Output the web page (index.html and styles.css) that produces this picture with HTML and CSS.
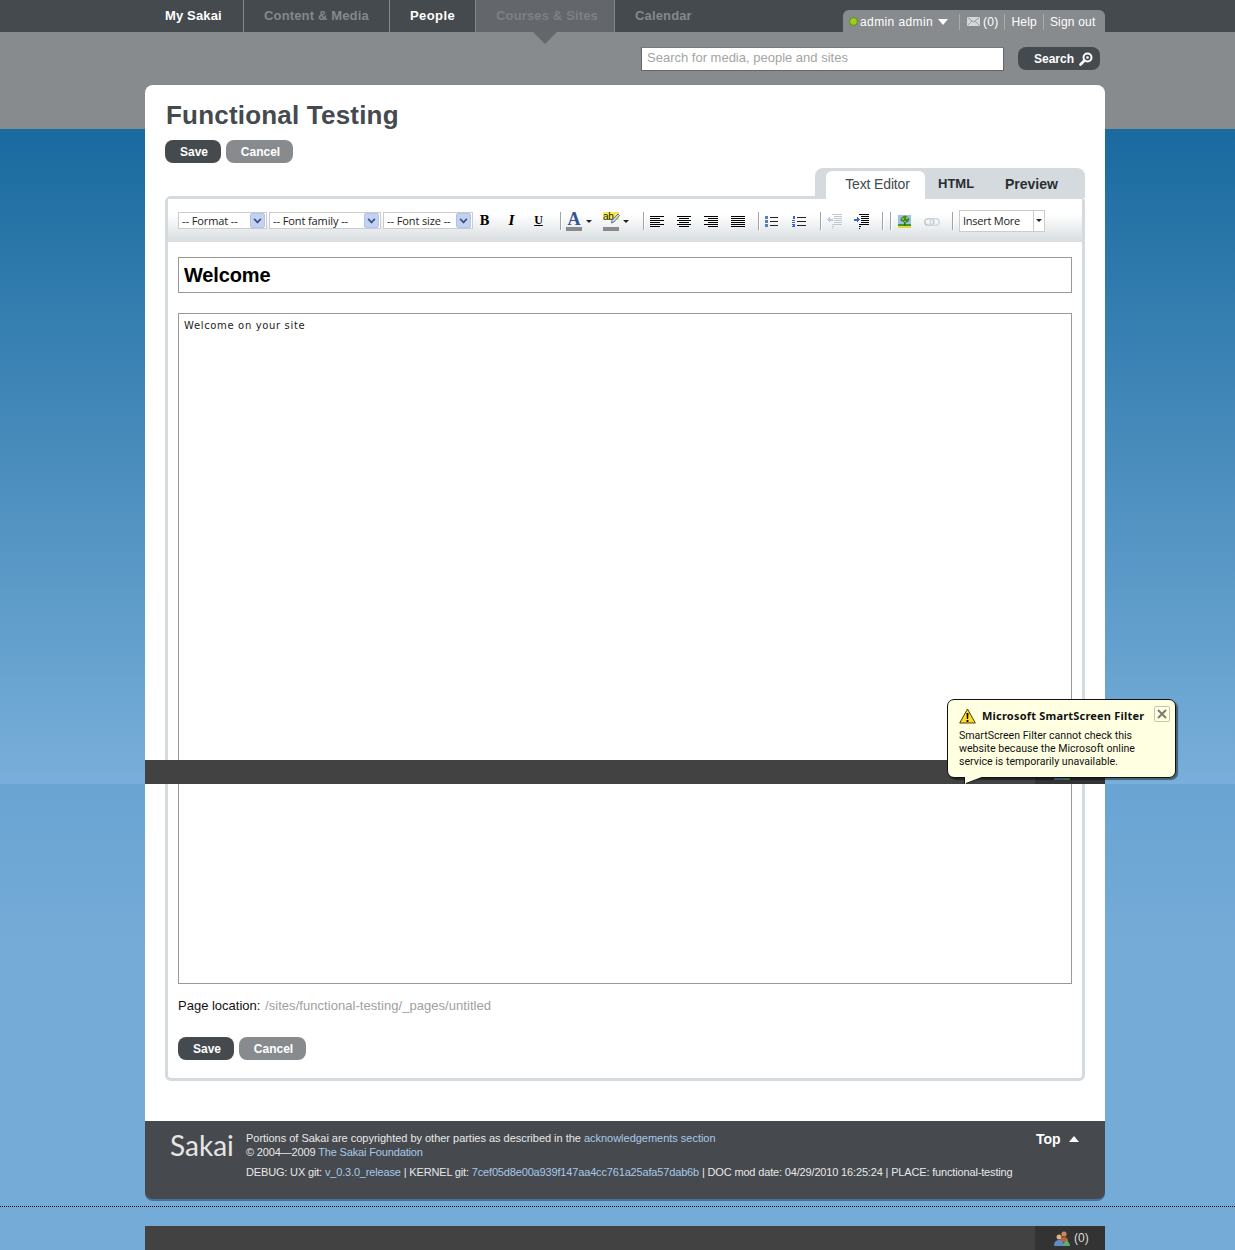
FILE: index.html
```html
<!DOCTYPE html>
<html lang="en">
<head>
    <meta charset="UTF-8">
    <meta name="viewport" content="width=device-width, initial-scale=1.0">
    <title>Functional Testing</title>
    <link rel="stylesheet" href="styles.css">
</head>
<body>

    <!-- toolbar icons -->
    <svg class="icon-defs" width="0" height="0" aria-hidden="true">
        <symbol id="i-left" viewBox="0 0 14 12" shape-rendering="crispEdges"><path d="M0 .5h14M0 2.500h10M0 4.500h14M0 6.500h10M0 8.500h14M0 10.500h10" stroke="#000"/></symbol>
        <symbol id="i-center" viewBox="0 0 14 12" shape-rendering="crispEdges"><path d="M0 .5h14M2 2.500h10M0 4.500h14M2 6.500h10M0 8.500h14M2 10.500h10" stroke="#000"/></symbol>
        <symbol id="i-right" viewBox="0 0 14 12" shape-rendering="crispEdges"><path d="M0 .5h14M4 2.500h10M0 4.500h14M4 6.500h10M0 8.500h14M4 10.500h10" stroke="#000"/></symbol>
        <symbol id="i-justify" viewBox="0 0 14 12" shape-rendering="crispEdges"><path d="M0 .5h14M0 2.500h14M0 4.500h14M0 6.500h14M0 8.500h14M0 10.500h14" stroke="#000"/></symbol>
        <symbol id="i-bullets" viewBox="0 0 14 12" shape-rendering="crispEdges"><path d="M5 1.500h8M5 5.500h8M5 9.500h8" stroke="#222"/><path d="M0 0h3v3H0zM0 4h3v3H0zM0 8h3v3H0z" fill="#5a7db8"/></symbol>
        <symbol id="i-numbers" viewBox="0 0 14 12" shape-rendering="crispEdges"><path d="M5 1.500h9M5 5.500h9M5 9.500h9" stroke="#222"/><path d="M1 0h2v3H1zM0 4h3v1H0zM0 6h3v1H0zM0 8h3v1H0zM1 9h2v1H1zM0 10h3v1H0z" fill="#3f66c4"/></symbol>
        <symbol id="i-outdent" viewBox="0 0 15 15" shape-rendering="crispEdges"><path d="M5 .5h10M7 2.500h8M7 4.500h8M7 6.500h8M7 8.500h8M5 10.500h10M5 12.500h2M5 14.500h1" stroke="#c4c8cc"/><path d="M0 5.500l3-3v2h3v2H3v2z" fill="#b9c8e6"/></symbol>
        <symbol id="i-indent" viewBox="0 0 15 15" shape-rendering="crispEdges"><path d="M5 .5h10M7 2.500h8M7 4.500h8M7 6.500h8M7 8.500h8M5 10.500h10M5 12.500h2M5 14.500h1" stroke="#000"/><path d="M6 5.500l-3-3v2H0v2h3v2z" fill="#3f66c4"/></symbol>
        <symbol id="i-picture" viewBox="0 0 13 13"><path d="M0 0h13v9H0z" fill="#9cc0e6"/><path d="M0 9h13v2H0z" fill="#3a9a2a"/><path d="M0 11h13v2H0z" fill="#e8d840"/><path d="M6 7h1.500v3.500H6z" fill="#6b4a1f"/><path d="M2 5l2-3 3-1.500L10 2l1.500 2.500L10 7 7 8 5 7z" fill="#3f8a22"/><path d="M4 3h2v2H4zM8 2h2v2H8zM6 6h2v1H6z" fill="#86c24a"/></symbol>
        <symbol id="i-link" viewBox="0 0 16 10"><rect x=".8" y="1.800" width="9" height="6.400" rx="3.200" fill="none" stroke="#c6cace" stroke-width="1.600"/><rect x="6.200" y="1.800" width="9" height="6.400" rx="3.200" fill="none" stroke="#d4d8db" stroke-width="1.600"/></symbol>
        <symbol id="i-people" viewBox="0 0 16 15"><circle cx="10" cy="3" r="2.600" fill="#c98a5a"/><path d="M6 10c0-3 2-4 4-4s4 1 4 4v1H6z" fill="#c0603a"/><circle cx="5" cy="6" r="2.500" fill="#e0b080"/><path d="M0 15c0-4 2-6 5-6s5 2 5 6z" fill="#5d8cc8"/><path d="M9 15c0-3 2-5 3.500-5S16 12 16 15z" fill="#58b070"/></symbol>
    </svg>

    <header class="top-nav">
        <nav class="main-links">
            <a class="main-link link-my active-link" href="#">My Sakai</a>
            <a class="main-link link-content" href="#">Content &amp; Media</a>
            <a class="main-link link-people active-link" href="#">People</a>
            <a class="main-link link-courses current-link" href="#">Courses &amp; Sites</a>
            <a class="main-link last-link" href="#">Calendar</a>
        </nav>
        <div class="user-box">
            <span class="online-dot"></span>
            <span class="user-name">admin admin</span>
            <span class="user-caret"></span>
            <span class="user-sep user-sep-first"></span>
            <svg class="mail-icon" width="13" height="9" viewBox="0 0 13 9"><path d="M0 0h13v9H0z" fill="#d4d6d8"/><path d="M.5.500l6 4.500 6-4.500M.5 8.500l4.500-4.500M12.500 8.500L8 4" fill="none" stroke="#9a9da0"/></svg>
            <span class="user-item">(0)</span>
            <span class="user-sep"></span>
            <span class="user-item">Help</span>
            <span class="user-sep"></span>
            <span class="user-item">Sign out</span>
        </div>
    </header>

    <div class="search-bar">
        <input class="search-input" type="text" placeholder="Search for media, people and sites">
        <button class="search-button" type="button">
            Search
            <svg width="14" height="14" viewBox="0 0 14 14"><circle cx="8.500" cy="5.500" r="4" fill="none" stroke="#fff" stroke-width="2"/><path d="M5.500 8.500L1.500 12.500" stroke="#fff" stroke-width="2.600" stroke-linecap="round"/><circle cx="8.500" cy="5.500" r="1.300" fill="#fff"/></svg>
        </button>
    </div>

    <main class="page">
        <section class="card">
            <h1 class="page-title">Functional Testing</h1>
            <div class="button-row">
                <button class="btn btn-save" type="button">Save</button>
                <button class="btn btn-cancel" type="button">Cancel</button>
            </div>

            <div class="tabs">
                <span class="tab tab-active">Text Editor</span>
                <span class="tab tab-html">HTML</span>
                <span class="tab tab-preview">Preview</span>
            </div>

            <div class="editor">
                <div class="toolbar">
                    <div class="tb-select tb-format"><span>-- Format --</span><i class="tb-arrow"></i></div>
                    <div class="tb-select tb-family"><span>-- Font family --</span><i class="tb-arrow"></i></div>
                    <div class="tb-select tb-size"><span>-- Font size --</span><i class="tb-arrow"></i></div>

                    <span class="tb-btn tb-first tb-b">B</span>
                    <span class="tb-btn tb-i">I</span>
                    <span class="tb-btn tb-u">U</span>
                    <span class="tb-sep tb-sep-8"></span>

                    <span class="tb-split tb-color">
                        <span class="color-a">A</span>
                        <i class="tb-caret"></i>
                    </span>
                    <span class="tb-split tb-hilite">
                        <span class="color-ab">ab<svg class="ab-pencil" width="9" height="11" viewBox="0 0 9 11"><path d="M7 1l1.500 1.500L3 9 .5 10 1 7.500z" fill="#d8e0ea" stroke="#5a6f90"/></svg></span>
                        <i class="tb-caret"></i>
                    </span>
                    <span class="tb-sep tb-sep-9"></span>

                    <span class="tb-btn tb-tuck"><svg width="14" height="12"><use href="#i-left"/></svg></span>
                    <span class="tb-btn"><svg width="14" height="12"><use href="#i-center"/></svg></span>
                    <span class="tb-btn"><svg width="14" height="12"><use href="#i-right"/></svg></span>
                    <span class="tb-btn"><svg width="14" height="12"><use href="#i-justify"/></svg></span>
                    <span class="tb-sep"></span>

                    <span class="tb-btn tb-tuck"><svg width="14" height="12"><use href="#i-bullets"/></svg></span>
                    <span class="tb-btn"><svg width="14" height="12"><use href="#i-numbers"/></svg></span>
                    <span class="tb-sep tb-sep-8"></span>

                    <span class="tb-btn"><svg width="15" height="15"><use href="#i-outdent"/></svg></span>
                    <span class="tb-btn"><svg width="15" height="15"><use href="#i-indent"/></svg></span>
                    <span class="tb-sep"></span>
                    <span class="tb-sep"></span>

                    <span class="tb-btn"><svg width="13" height="13"><use href="#i-picture"/></svg></span>
                    <span class="tb-btn"><svg width="16" height="10"><use href="#i-link"/></svg></span>
                    <span class="tb-sep"></span>

                    <div class="tb-more"><span>Insert More</span><i class="tb-more-arrow"></i></div>
                </div>

                <div class="editor-body">
                    <div class="title-input">Welcome</div>
                    <div class="body-input">Welcome on your site</div>
                    <p class="page-location">Page location: <span class="location-path">/sites/functional-testing/_pages/untitled</span></p>
                    <div class="button-row">
                        <button class="btn btn-save" type="button">Save</button>
                        <button class="btn btn-cancel" type="button">Cancel</button>
                    </div>
                </div>
            </div>
        </section>

        <footer class="site-footer">
            <div class="footer-logo">Sakai</div>
            <div class="footer-text">
                <p class="footer-portions">Portions of Sakai are copyrighted by other parties as described in the <a href="#">acknowledgements section</a></p>
                <p class="footer-copy">&copy; 2004&mdash;2009 <a href="#">The Sakai Foundation</a></p>
                <p class="footer-debug">DEBUG: UX git: <a href="#">v_0.3.0_release</a> | KERNEL git: <a href="#">7cef05d8e00a939f147aa4cc761a25afa57dab6b</a> | DOC mod date: 04/29/2010 16:25:24 | PLACE: functional-testing</p>
            </div>
            <a class="footer-top" href="#">Top <i class="top-arrow"></i></a>
        </footer>
    </main>

    <div class="dotted-rule"></div>

    <div class="chat-bar">
        <div class="chat-online">
            <svg width="16" height="15"><use href="#i-people"/></svg>
            <span>(0)</span>
        </div>
    </div>

    <!-- same bar again, caught half way down the page by the capture -->
    <div class="chat-bar chat-bar-seam">
        <div class="chat-online">
            <svg width="16" height="15"><use href="#i-people"/></svg>
        </div>
    </div>

    <div class="smartscreen">
        <div class="smartscreen-head">
            <svg width="17" height="16" viewBox="0 0 17 16"><path d="M8.500 1L16.300 15H.7z" fill="#ffd92e" stroke="#4a4200" stroke-linejoin="round"/><path d="M7.500 5h2l-.4 6H7.900zM7.600 12h1.800v2H7.600z" fill="#000"/></svg>
            <strong>Microsoft SmartScreen Filter</strong>
        </div>
        <p>SmartScreen Filter cannot check this website because the Microsoft online service is temporarily unavailable.</p>
        <span class="smartscreen-close">
            <svg width="10" height="10" viewBox="0 0 10 10"><path d="M1 1l8 8M9 1l-8 8" stroke="#7f7a70" stroke-width="2"/></svg>
        </span>
        <svg class="smartscreen-tail" width="21" height="8" viewBox="0 0 21 8"><path d="M1 0v7L19 0z" fill="#ffffe1"/><path d="M.5 0v6.500M2 6.500L19 0" stroke="#111" fill="none"/></svg>
    </div>

</body>
</html>
```

FILE: styles.css
```css
* {
    box-sizing: border-box;
}

html,
body {
    height: 1250px;
}

body {
    margin: 0;
    position: relative;
    overflow: hidden;
    font-family: "Liberation Sans", Arial, sans-serif;
    font-size: 12px;
    background-color: #75abd7;
    background-image: linear-gradient(to bottom,
        #888b8e 0, #888b8e 129px,
        #196a9f 129px, #79afda 784px,
        #69a4d2 784px, #75abd7 950px);
}

p {
    margin: 0;
}

a {
    text-decoration: none;
}

.icon-defs {
    position: absolute;
}

/* top navigation */
.top-nav {
    height: 32px;
    background-color: #454a4f;
    padding-left: 145px;
    display: flex;
    justify-content: space-between;
    padding-right: 130px;
}

.main-links {
    display: flex;
}

.main-link {
    display: block;
    padding: 0 0 0 20px;
    line-height: 32px;
    font-size: 13px;
    font-weight: bold;
    letter-spacing: 0.15px;
    color: #85888b;
    border-right: 1px solid #85888b;
}

.link-my {
    width: 99px;
}

.link-content {
    width: 146px;
}

.link-people {
    width: 86px;
    letter-spacing: 0.4px;
}

.link-courses {
    width: 139px;
}

.active-link {
    color: #fff;
}

.current-link {
    background-color: #63676c;
    color: #7d8084;
    position: relative;
}

.current-link::after {
    content: "";
    position: absolute;
    left: 57px;
    top: 32px;
    border-left: 12px solid transparent;
    border-right: 12px solid transparent;
    border-top: 12px solid #63676c;
}

.last-link {
    border-right: none;
}

.user-box {
    align-self: flex-end;
    height: 22px;
    width: 262px;
    padding: 1px 0 0 6px;
    display: flex;
    align-items: center;
    background-color: #888b8e;
    border-radius: 6px 6px 0 0;
    font-size: 12px;
    color: #fff;
}

.online-dot {
    width: 9px;
    height: 9px;
    border-radius: 50%;
    background-color: #9ccc1f;
    border: 1px solid #5f8a12;
    margin-right: 2px;
}

.user-name {
    letter-spacing: 0.4px;
}

.user-caret {
    margin-left: 5px;
    border-left: 5.5px solid transparent;
    border-right: 5.5px solid transparent;
    border-top: 6px solid #fff;
}

.user-sep {
    width: 1px;
    height: 16px;
    background-color: #a9abad;
    margin: 0 6px;
}

.user-sep-first {
    margin: 0 7px 0 11px;
}

.mail-icon {
    margin-right: 3px;
}

.user-item {
    letter-spacing: 0.2px;
}

/* search */
.search-bar {
    height: 53px;
    padding: 15px 135px 0 641px;
    display: flex;
    align-items: flex-start;
}

.search-input {
    width: 363px;
    height: 24px;
    border: 1px solid #666;
    border-top-color: #777;
    padding: 0 5px 3px;
    font-family: "Liberation Sans", Arial, sans-serif;
    font-size: 13px;
    background-color: #fff;
}

.search-input::placeholder {
    color: #a4a4a4;
    opacity: 1;
}

.search-button {
    margin-left: 14px;
    width: 82px;
    height: 23px;
    padding: 0 0 0 16px;
    border: none;
    border-radius: 8px;
    background-color: #454a4f;
    color: #fff;
    font-family: "Liberation Sans", Arial, sans-serif;
    font-size: 12px;
    font-weight: bold;
    display: flex;
    align-items: center;
    gap: 5px;
}

/* main card */
.page {
    width: 960px;
    margin-left: 145px;
}

.card {
    height: 1036px;
    background-color: #fff;
    border-radius: 8px 8px 0 0;
    padding: 14px 20px 0;
}

.page-title {
    margin: 0;
    height: 41px;
    padding-left: 1px;
    font-size: 26px;
    line-height: 32px;
    letter-spacing: 0.2px;
    color: #454a4f;
}

.button-row {
    display: flex;
    gap: 5px;
}

.btn {
    height: 23px;
    border: none;
    border-radius: 8px;
    font-family: "Liberation Sans", Arial, sans-serif;
    font-size: 12px;
    font-weight: bold;
    color: #fff;
    padding: 0 0 0 2px;
}

.btn-save {
    width: 56px;
    background-color: #454a4f;
}

.btn-cancel {
    width: 67px;
    background-color: #888b8e;
}

/* tabs */
.tabs {
    margin: 5px 0 0 650px;
    width: 270px;
    height: 30px;
    background-color: #d5dade;
    border-radius: 8px 8px 0 0;
    position: relative;
    font-size: 14px;
    margin-bottom: -2px;
}

.tab {
    position: absolute;
    top: 3px;
    line-height: 26px;
}

.tab-active {
    left: 11px;
    width: 99px;
    height: 28px;
    padding-left: 4px;
    text-align: center;
    background-color: #fff;
    border-radius: 6px 6px 0 0;
    letter-spacing: -0.15px;
    color: #454a4f;
    z-index: 1;
}

.tab-html {
    left: 123px;
    font-size: 13px;
    font-weight: bold;
    color: #2a2e32;
}

.tab-preview {
    left: 190px;
    font-weight: bold;
    color: #2a2e32;
}

/* editor */
.editor {
    height: 885px;
    border: 3px solid #d5dade;
    border-radius: 6px;
    background-color: #fff;
}

.toolbar {
    height: 43px;
    padding-left: 10px;
    display: flex;
    align-items: center;
    background-image: linear-gradient(to bottom, #fff 0, #fff 35%, #d8dde0 100%);
    font-family: "Open Sans", sans-serif;
    font-size: 11px;
    color: #222;
}

.tb-select {
    height: 17px;
    margin-right: 2px;
    padding: 0 1px 0 3px;
    display: flex;
    align-items: center;
    justify-content: space-between;
    background-color: #fff;
    border: 1px solid #ccc;
    line-height: 15px;
    white-space: nowrap;
    letter-spacing: -0.1px;
}

.tb-format {
    width: 89px;
}

.tb-family {
    width: 112px;
}

.tb-size {
    width: 90px;
    margin-right: 0;
}

.tb-arrow {
    flex: none;
    width: 15px;
    height: 15px;
    background-color: #c3d2f0;
    border: 1px solid #b4c4e8;
    border-radius: 2px;
    position: relative;
}

.tb-arrow::after {
    content: "";
    position: absolute;
    left: 3px;
    top: 2px;
    width: 5px;
    height: 5px;
    border-right: 2px solid #3a4f80;
    border-bottom: 2px solid #3a4f80;
    transform: rotate(45deg) scale(0.8);
}

.tb-btn {
    width: 27px;
    height: 20px;
    display: flex;
    align-items: center;
    justify-content: center;
    color: #000;
}

.tb-btn svg {
    margin-top: 2px;
}

.tb-first {
    margin-left: -2px;
}

.tb-tuck {
    margin-left: -1px;
}

.tb-b {
    font-family: "DejaVu Serif", serif;
    font-weight: bold;
    font-size: 12px;
}

.tb-i {
    font-family: "DejaVu Serif", serif;
    font-weight: bold;
    font-style: italic;
    font-size: 12px;
}

.tb-u {
    font-family: "Liberation Serif", serif;
    font-weight: bold;
    font-size: 12px;
    text-decoration: underline;
}

.tb-sep {
    width: 1px;
    height: 18px;
    margin-left: 7px;
    background-color: #a0a4a8;
    box-shadow: 1px 0 0 #fff;
}

.tb-sep-8 {
    margin-left: 8px;
}

.tb-sep-9 {
    margin-left: 9px;
}

.tb-split {
    display: flex;
    align-items: center;
    height: 20px;
    margin-top: 1px;
}

.tb-color {
    width: 36px;
    padding-left: 5px;
}

.tb-hilite {
    width: 37px;
    padding-left: 6px;
}

.color-a {
    width: 16px;
    height: 19px;
    text-align: center;
    font-family: "Liberation Serif", serif;
    font-weight: bold;
    font-size: 18px;
    line-height: 15px;
    color: #2f5597;
    border-bottom: 4px solid #8a8a8a;
}

.color-ab {
    width: 16px;
    height: 19px;
    position: relative;
    background-image: linear-gradient(to bottom, #f4ec4e 0, #f4ec4e 8px, transparent 8px);
    font-family: "Liberation Sans", sans-serif;
    font-size: 10px;
    line-height: 9px;
    letter-spacing: -0.3px;
    color: #222;
    border-bottom: 4px solid #8a8a8a;
}

.ab-pencil {
    position: absolute;
    left: 8px;
    top: 1px;
}

.tb-caret {
    margin-left: 4px;
    border-left: 3px solid transparent;
    border-right: 3px solid transparent;
    border-top: 3px solid #222;
}

.tb-more {
    margin-left: 6px;
    width: 86px;
    height: 22px;
    padding-left: 3px;
    display: flex;
    align-items: center;
    justify-content: space-between;
    background-color: #fff;
    border: 1px solid #ccc;
    white-space: nowrap;
    letter-spacing: -0.25px;
}

.tb-more-arrow {
    width: 11px;
    height: 100%;
    border-left: 1px solid #ccc;
    position: relative;
}

.tb-more-arrow::after {
    content: "";
    position: absolute;
    left: 2px;
    top: 8px;
    border-left: 3px solid transparent;
    border-right: 3px solid transparent;
    border-top: 3px solid #222;
}

.editor-body {
    padding: 15px 10px 0;
}

.title-input {
    height: 36px;
    padding-left: 5px;
    border: 1px solid #999;
    font-size: 20px;
    font-weight: bold;
    line-height: 34px;
    letter-spacing: -0.15px;
    color: #000;
}

.body-input {
    margin-top: 20px;
    height: 671px;
    padding: 5px;
    border: 1px solid #999;
    font-family: "DejaVu Sans", sans-serif;
    font-size: 10px;
    line-height: 13px;
    letter-spacing: 0.65px;
    color: #222;
}

.page-location {
    margin-top: 14px;
    height: 39px;
    font-size: 13px;
    line-height: 15px;
    color: #111;
}

.location-path {
    margin-left: 1px;
    letter-spacing: 0.05px;
    color: #a0a0a0;
}

/* footer */
.site-footer {
    height: 80px;
    display: flex;
    padding: 10px 0 0 25px;
    background-color: #464a4f;
    border-bottom: 2px solid #4a7196;
    border-radius: 0 0 8px 8px;
    color: #e8e8e8;
    font-size: 11px;
    line-height: 14px;
    position: relative;
}

.footer-logo {
    width: 76px;
    font-family: Lato, sans-serif;
    font-size: 28px;
    line-height: 28px;
    color: #e6e6e6;
}

.footer-text a {
    color: #a8c8e8;
}

.footer-portions {
    letter-spacing: -0.02px;
}

.footer-copy {
    letter-spacing: -0.15px;
}

.footer-debug {
    margin-top: 6px;
    letter-spacing: -0.16px;
}

.footer-top {
    position: absolute;
    left: 891px;
    top: 10px;
    color: #fff;
    font-size: 14px;
    font-weight: bold;
    line-height: 16px;
    display: flex;
    align-items: center;
    gap: 8px;
}

.top-arrow {
    border-left: 5px solid transparent;
    border-right: 5px solid transparent;
    border-bottom: 6px solid #fff;
}

.dotted-rule {
    margin-top: 5px;
    border-top: 1px dotted #111;
}

/* chat bar */
.chat-bar {
    margin: 19px 0 0 145px;
    width: 960px;
    height: 24px;
    background-color: #424242;
    display: flex;
    justify-content: flex-end;
}

.chat-bar-seam {
    position: absolute;
    left: 0;
    top: 760px;
    margin: 0 0 0 145px;
}

.chat-online {
    width: 70px;
    padding-left: 19px;
    display: flex;
    align-items: center;
    gap: 4px;
    background-color: #333;
    color: #ddd;
    font-size: 12px;
}

/* browser balloon over the page */
.smartscreen {
    position: absolute;
    left: 947px;
    top: 699px;
    width: 229px;
    height: 79px;
    padding: 7px 11px;
    background-color: #ffffe1;
    border: 1px solid #111;
    border-radius: 7px;
    box-shadow: 2px 2px 1px rgba(0, 0, 0, 0.45);
    font-family: Roboto, sans-serif;
    font-size: 10.6px;
    line-height: 13px;
    color: #111;
}

.smartscreen-head {
    display: flex;
    align-items: center;
    gap: 6px;
    height: 17px;
    margin-bottom: 5px;
}

.smartscreen-head strong {
    font-family: "Noto Sans", sans-serif;
    font-size: 11px;
    letter-spacing: 0.2px;
}

.smartscreen-close {
    position: absolute;
    left: 206px;
    top: 6px;
    width: 16px;
    height: 16px;
    display: flex;
    align-items: center;
    justify-content: center;
    border: 1px solid #c9c4b0;
    border-radius: 2px;
}

.smartscreen-tail {
    position: absolute;
    left: 16px;
    top: 77px;
}
```
